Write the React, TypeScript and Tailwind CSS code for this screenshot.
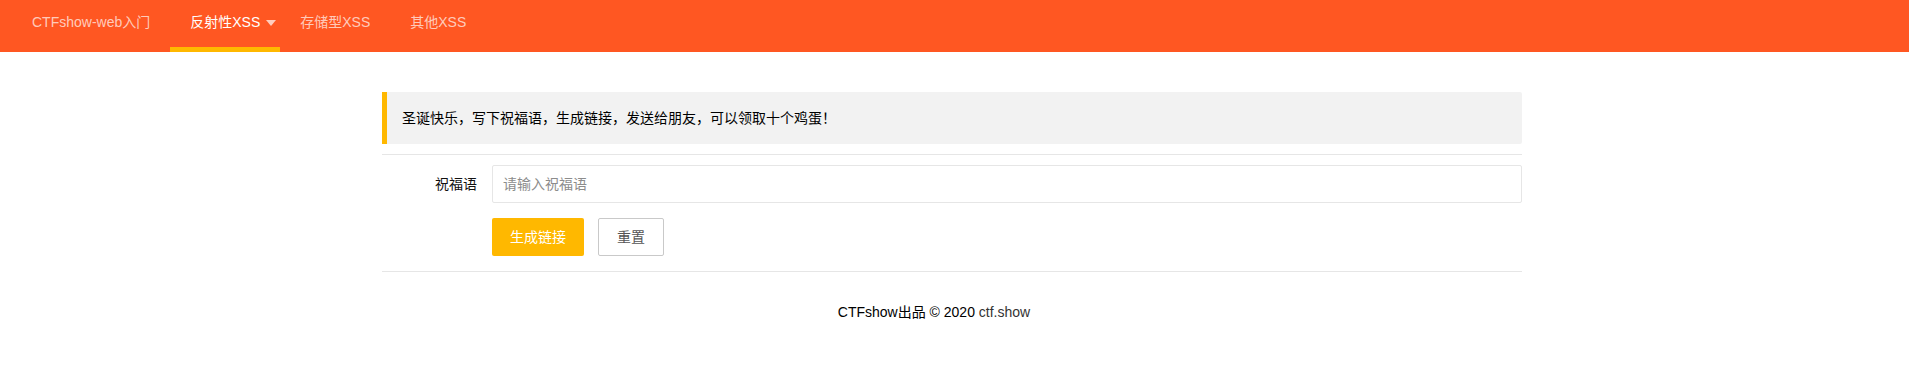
import React from "react";

const navItems = [
  { label: "CTFshow-web入门", active: false, more: false },
  { label: "反射性XSS", active: true, more: true },
  { label: "存储型XSS", active: false, more: false },
  { label: "其他XSS", active: false, more: false },
];

const font = "font-['Liberation_Sans','Noto_Sans_CJK_SC',sans-serif]";

export default function App() {
  return (
    <div className={`min-h-[384px] bg-white text-[14px] ${font}`}>
      {/* top nav */}
      <ul className="flex h-[52px] bg-[#FF5722] pl-[12px]">
        {navItems.map((item) => (
          <li
            key={item.label}
            className={`relative flex h-[52px] items-start border-b-[5px] px-5 leading-[44px] ${
              item.active ? "border-[#FFB800] text-white" : "border-transparent text-white/70"
            }`}
          >
            {item.label}
            {item.more && (
              <span className="absolute right-[4px] top-[20px] h-0 w-0 border-x-[5px] border-t-[6px] border-x-transparent border-t-white/70" />
            )}
          </li>
        ))}
      </ul>

      <div className="pr-[5px]">
        <div className="mx-auto w-[1140px]">
          {/* notice */}
          <blockquote className="mt-10 rounded-r-[2px] border-l-[5px] border-[#FFB800] bg-[#f2f2f2] px-[15px] py-[15px] leading-[22px] text-black">
            圣诞快乐，写下祝福语，生成链接，发送给朋友，可以领取十个鸡蛋！
          </blockquote>

          <hr className="mt-[10px] border-0 border-t border-[#e6e6e6]" />

          {/* form */}
          <form className="mt-[10px]">
            <div className="mb-[15px] flex">
              <label className="w-[110px] shrink-0 px-[15px] py-[9px] text-right leading-[20px] text-[#111]">
                祝福语
              </label>
              <input
                className="h-[38px] flex-1 rounded-[2px] border border-[#e6e6e6] px-[10px] text-[14px] text-[#333] outline-none placeholder:text-[#8c8c8c]"
                placeholder="请输入祝福语"
              />
            </div>
            <div className="mb-[15px] flex gap-[14px] pl-[110px]">
              <button
                type="button"
                className="h-[38px] rounded-[2px] bg-[#FFB800] px-[18px] text-[14px] text-white"
              >
                生成链接
              </button>
              <button
                type="reset"
                className="h-[38px] rounded-[2px] border border-[#C9C9C9] bg-white px-[18px] text-[14px] text-[#555]"
              >
                重置
              </button>
            </div>
          </form>

          <hr className="border-0 border-t border-[#e6e6e6]" />

          {/* footer */}
          <div className="mt-[30px] pr-[36px] text-center leading-[20px] text-black">
            CTFshow出品 © 2020 <a className="text-[#333]">ctf.show</a>
          </div>
        </div>
      </div>
    </div>
  );
}
